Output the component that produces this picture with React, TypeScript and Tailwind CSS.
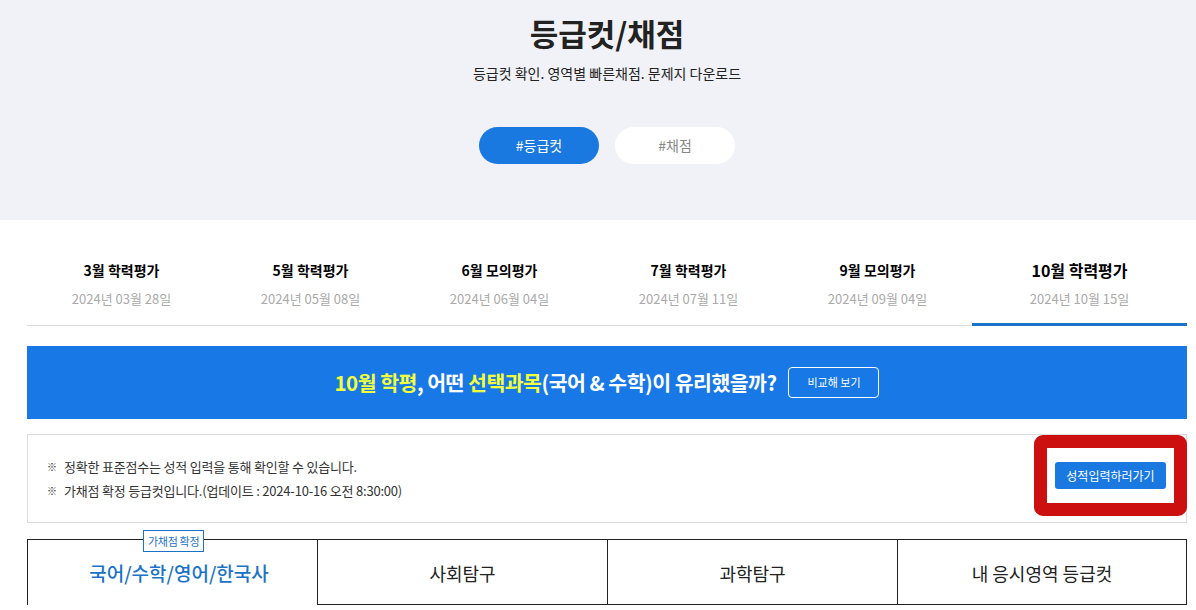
const font = { fontFamily: '"Noto Sans CJK KR", "Noto Sans", sans-serif' };

const exams = [
  { title: "3월 학력평가", date: "2024년 03월 28일" },
  { title: "5월 학력평가", date: "2024년 05월 08일" },
  { title: "6월 모의평가", date: "2024년 06월 04일" },
  { title: "7월 학력평가", date: "2024년 07월 11일" },
  { title: "9월 모의평가", date: "2024년 09월 04일" },
  { title: "10월 학력평가", date: "2024년 10월 15일", active: true },
];

const subjects = ["국어/수학/영어/한국사", "사회탐구", "과학탐구", "내 응시영역 등급컷"];

export default function App() {
  return (
    <div className="w-[1196px] h-[610px] overflow-hidden bg-white" style={font}>
      {/* header */}
      <div className="h-[220px] bg-[#f0f2f7]">
        <div className="ml-[27px] w-[1160px] flex flex-col items-center">
          <h1 className="mt-[14px] text-[31px] leading-[38px] font-bold text-[#222]">등급컷/채점</h1>
          <p className="mt-[11px] text-[14px] leading-5 text-[#222]">등급컷 확인. 영역별 빠른채점. 문제지 다운로드</p>
          <div className="mt-[44px] flex gap-4">
            <button className="w-[120px] h-[37px] rounded-full bg-[#1a78e1] text-white text-[14px]">#등급컷</button>
            <button className="w-[120px] h-[37px] rounded-full bg-white text-[#888] text-[14px]">#채점</button>
          </div>
        </div>
      </div>

      {/* exam tabs */}
      <div className="ml-[27px] w-[1160px] grid grid-cols-[189px_189px_189px_189px_189px_1fr] border-b border-[#dcdcdc]">
        {exams.map((e) => (
          <div
            key={e.title}
            className={
              "flex flex-col items-center pt-[40px] pb-[14px] -mb-px " +
              (e.active ? "border-b-[3px] border-[#1a73c8]" : "border-b-[3px] border-transparent")
            }
          >
            <div className={e.active ? "text-[16px] leading-5 font-bold text-black" : "text-[14px] leading-5 font-bold text-black"}>
              {e.title}
            </div>
            <div className="mt-[9px] text-[13px] leading-5 text-[#aaa]">{e.date}</div>
          </div>
        ))}
      </div>

      {/* banner */}
      <div className="ml-[27px] w-[1160px] mt-[20px] h-[73px] bg-[#1878e6] flex items-center justify-center gap-3">
        <div className="text-[20.5px] font-bold text-white tracking-tight">
          <span className="text-[#f2ff3a]">10월 학평</span>, 어떤{" "}
          <span className="text-[#f2ff3a]">선택과목</span>(국어 &amp; 수학)이 유리했을까?
        </div>
        <button className="w-[91px] h-[31px] border border-white rounded-[4px] text-white text-[11px]">비교해 보기</button>
      </div>

      {/* notice */}
      <div className="relative ml-[27px] w-[1160px] mt-[15px] h-[89px] border border-[#ddd] flex flex-col justify-center pl-[19px] gap-[4px]">
        <div className="flex items-center text-[13px] leading-5 text-[#333] tracking-[-0.2px]">
          <span className="w-[17px] text-[10px]">※</span>정확한 표준점수는 성적 입력을 통해 확인할 수 있습니다.
        </div>
        <div className="flex items-center text-[13px] leading-5 text-[#333] tracking-[-0.2px]">
          <span className="w-[17px] text-[10px]">※</span>가채점 확정 등급컷입니다.(업데이트 : 2024-10-16 오전 8:30:00)
        </div>
        <div className="absolute right-[-1px] top-0 w-[153px] h-[81px] border-[13px] border-[#cc1010] rounded-[9px] bg-white flex items-center justify-center">
          <button className="w-[111px] h-[27px] rounded-[3px] bg-[#1a78e1] text-white text-[12px]">성적입력하러가기</button>
        </div>
      </div>

      {/* subject tabs */}
      <div className="ml-[27px] w-[1160px] mt-[16px] h-[66px] grid grid-cols-4 border-t border-[#222]">
        {subjects.map((s, i) => (
          <div
            key={s}
            className={
              "relative flex items-center justify-center border-[#222] " +
              (i === 0 ? "border-l" : "border-l border-b") +
              (i === 3 ? " border-r" : "")
            }
          >
            {i === 0 && (
              <span className="absolute top-[-10px] left-[115px] h-[22px] px-[4px] bg-white border border-[#1a73c8] text-[#1a73c8] text-[11px] leading-[20px] tracking-[-0.3px]">
                가채점 확정
              </span>
            )}
            <span className={i === 0 ? "ml-[13px] text-[19px] font-medium text-[#1a73c8] mt-[2px]" : "text-[18px] text-[#222] mt-[2px]"}>{s}</span>
          </div>
        ))}
      </div>
    </div>
  );
}
